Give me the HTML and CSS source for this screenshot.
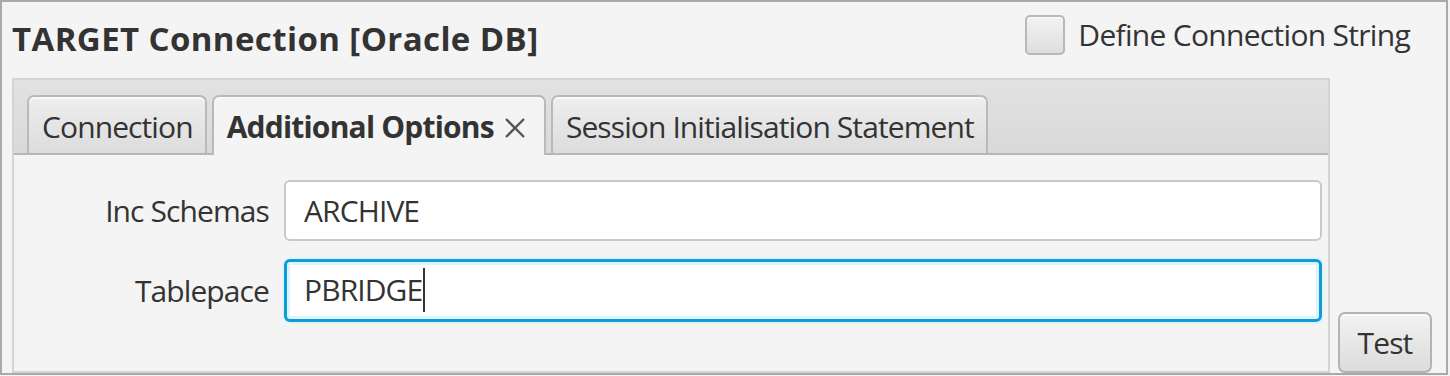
FILE: index.html
```html
<!DOCTYPE html>
<html>
<head>
<meta charset="utf-8">
<link rel="stylesheet" href="styles.css">
</head>
<body>
<div class="frame">
  <div class="header">
    <div class="title">TARGET Connection [Oracle DB]</div>
    <label class="check">
      <span class="box"></span>
      <span class="check-label">Define Connection String</span>
    </label>
  </div>
  <div class="body">
    <div class="tabpane">
      <div class="tabbar">
        <div class="tab">Connection</div>
        <div class="tab selected">Additional Options<svg class="close" width="22" height="22" viewBox="0 0 22 22"><path d="M2 2 L20 20 M20 2 L2 20" stroke="#555" stroke-width="2.4" fill="none"/></svg></div>
        <div class="tab">Session Initialisation Statement</div>
      </div>
      <div class="content">
        <div class="form">
          <div class="lbl">Inc Schemas</div>
          <div class="field">ARCHIVE</div>
          <div class="lbl">Tablepace</div>
          <div class="field focused">PBRIDGE<span class="caret"></span></div>
        </div>
      </div>
    </div>
    <button class="btn">Test</button>
  </div>
</div>
</body>
</html>
```
FILE: styles.css
```css
html, body {
  margin: 0;
  padding: 0;
  background: #f4f4f4;
}
body {
  width: 1450px;
  height: 376px;
  overflow: hidden;
  font-family: "Open Sans", "Noto Sans", sans-serif;
  color: #333;
}
.frame {
  box-sizing: border-box;
  width: 1448px;
  height: 375px;
  border: 2px solid #a9a9a9;
  background: #f4f4f4;
  display: flex;
  flex-direction: column;
  padding: 0 14px 0 10px;
}
.header {
  height: 76px;
  display: flex;
  justify-content: space-between;
  align-items: flex-start;
}
.title {
  font-weight: 700;
  font-size: 33px;
  line-height: 40px;
  margin-top: 17px;
  letter-spacing: 0.4px;
}
.check {
  display: flex;
  align-items: center;
  margin-top: 13px;
  margin-right: 22px;
}
.box {
  box-sizing: border-box;
  width: 40px;
  height: 40px;
  border: 2px solid #b8b8b8;
  border-radius: 5px;
  background: linear-gradient(#f3f3f3, #dedede);
  box-shadow: inset 0 1px 0 #fafafa;
  margin-right: 13px;
}
.check-label {
  font-size: 30px;
  line-height: 40px;
  letter-spacing: -0.7px;
}
.body {
  flex: 1;
  display: flex;
  align-items: flex-end;
}
.tabpane {
  box-sizing: border-box;
  width: 1318px;
  height: 100%;
  border: 2px solid #d4d4d4;
  display: flex;
  flex-direction: column;
}
.tabbar {
  height: 58px;
  padding: 15px 0 0 13px;
  background: linear-gradient(#e2e2e2, #d9d9d9);
  border-bottom: 2px solid #b6b6b6;
  display: flex;
  align-items: flex-start;
  gap: 5px;
}
.tab {
  box-sizing: border-box;
  height: 58px;
  padding: 10px 12px 0 13px;
  font-size: 30px;
  line-height: 40px;
  letter-spacing: -0.9px;
  white-space: nowrap;
  border: 2px solid #b9b9b9;
  border-bottom: none;
  border-radius: 7px 7px 0 0;
  background: linear-gradient(#eeeeee, #dcdcdc);
  box-shadow: inset 0 2px 0 #f8f8f8;
}
.tab.selected {
  height: 60px;
  margin-bottom: -2px;
  position: relative;
  z-index: 1;
  background: #f4f4f4;
  font-weight: 700;
  letter-spacing: -0.8px;
  padding-right: 18px;
  padding-left: 13px;
  display: flex;
  align-items: flex-start;
}
.close {
  margin: 10px 0 0 10px;
}
.content {
  flex: 1;
  background: #f4f4f4;
  padding: 25px 6px 0 0;
}
.form {
  display: grid;
  grid-template-columns: 255px 1fr;
  column-gap: 15px;
  row-gap: 18px;
  align-items: center;
}
.lbl {
  text-align: right;
  font-size: 30px;
  line-height: 40px;
  letter-spacing: -0.9px;
}
.field {
  box-sizing: border-box;
  height: 61px;
  border: 2px solid #c9c9c9;
  border-radius: 6px;
  background: #fff;
  padding: 9px 0 0 18px;
  font-size: 30px;
  line-height: 40px;
  letter-spacing: -0.9px;
  display: flex;
  align-items: flex-start;
}
.field.focused {
  height: 63px;
  border: 3px solid #0a9dd7;
  padding: 8px 0 0 17px;
  box-shadow: inset 0 0 0 3px #dff1fa, 0 0 0 2px #e2f2f9;
}
.caret {
  display: inline-block;
  width: 2px;
  height: 44px;
  margin-left: 1px;
  background: #333;
  margin-top: -2px;
}
.btn {
  box-sizing: border-box;
  margin-left: 8px;
  width: 94px;
  height: 61px;
  border: 2px solid #b3b3b3;
  border-radius: 7px;
  background: linear-gradient(#f2f2f2, #dcdcdc);
  box-shadow: inset 0 2px 0 #fafafa;
  font-family: "Open Sans", "Noto Sans", sans-serif;
  font-size: 30px;
  letter-spacing: -0.9px;
  color: #333;
  padding: 0;
  line-height: 40px;
}
```
